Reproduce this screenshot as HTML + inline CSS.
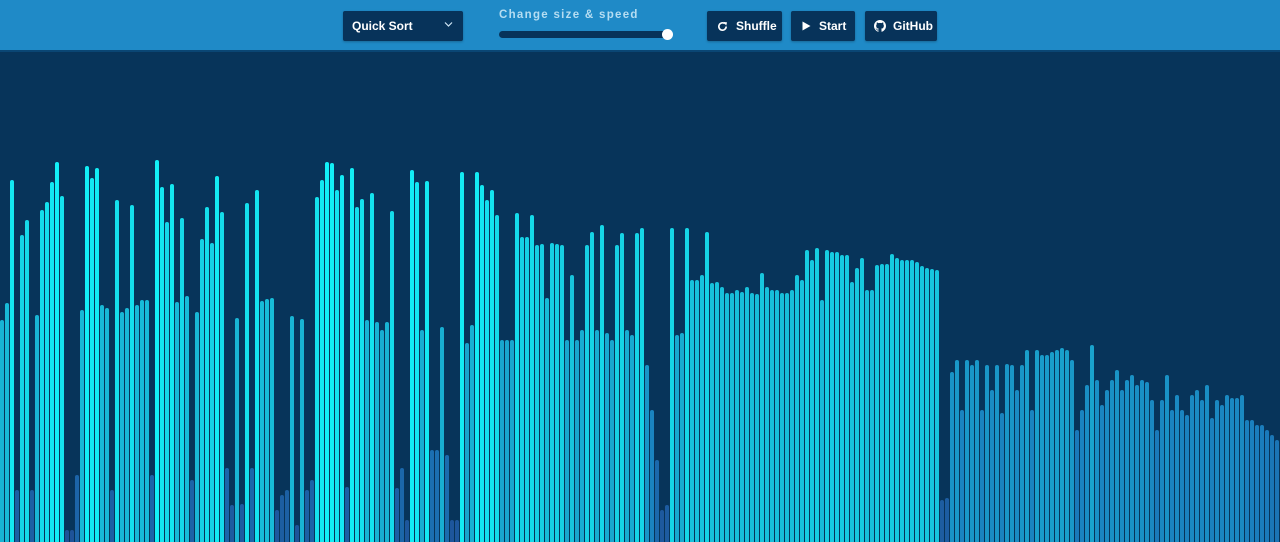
<!DOCTYPE html>
<html><head><meta charset="utf-8"><style>
*{margin:0;padding:0;box-sizing:border-box}
body{width:1280px;height:542px;overflow:hidden;background:#07345a;font-family:"Liberation Sans",sans-serif}
#hdr{position:absolute;left:0;top:0;width:1280px;height:52px;background:#1f8ac7;border-bottom:2px solid #0a4674}
.btn{position:absolute;top:11px;height:30px;background:#07335a;color:#fff;font-weight:bold;font-size:12px;border-radius:2px;display:flex;align-items:center;box-shadow:0 1px 2px rgba(0,0,0,.25)}
#lbl{position:absolute;left:499px;width:200px;top:9px;font-size:11.5px;font-weight:bold;color:#b5ddf2;letter-spacing:1.3px}
#track{position:absolute;left:499px;top:31px;width:170px;height:7px;background:#07335a;border-radius:4px}
#thumb{position:absolute;left:662px;top:29px;width:11px;height:11px;background:#fff;border-radius:50%}
#bars{position:absolute;left:0;top:53px;width:1280px;height:489px}
#bars div{position:absolute;bottom:0;width:4.4px;border-radius:2px 2px 0 0}
</style></head><body>
<div id="hdr">
<div class="btn" style="left:343px;width:120px;padding-left:9px">Quick Sort<svg style="position:absolute;left:101px;top:10px" width="9" height="7" viewBox="0 0 9 7"><path d="M1 1.5 L4.5 5 L8 1.5" fill="none" stroke="#cfe6f5" stroke-width="1.2"/></svg></div>
<div id="lbl">Change size &amp; speed</div>
<div id="track"></div><div id="thumb"></div>
<div class="btn" style="left:707px;width:75px;padding-left:10px"><svg width="11" height="11" viewBox="0 0 12 12" style="margin-right:8px"><path d="M10 6 A4 4 0 1 1 8.5 2.9" fill="none" stroke="#fff" stroke-width="1.8"/><path d="M7 1 L11 1.5 L10 5 Z" fill="#fff"/></svg>Shuffle</div>
<div class="btn" style="left:791px;width:64px;padding-left:11px"><svg width="9" height="10" viewBox="0 0 9 10" style="margin-right:8px"><path d="M0.5 0.5 L8.5 5 L0.5 9.5Z" fill="#fff"/></svg>Start</div>
<div class="btn" style="left:865px;width:72px;padding-left:9px"><svg width="12" height="12" viewBox="0 0 16 16" style="margin-right:7px"><path fill="#fff" d="M8 0C3.58 0 0 3.580 0 8c0 3.54 2.290 6.530 5.470 7.590.4.07.55-.17.55-.38v-1.33c-2.230.48-2.700-1.070-2.700-1.070-.36-.92-.89-1.170-.89-1.170-.73-.5.06-.49.06-.49.8.06 1.230.83 1.230.83.72 1.230 1.880.87 2.330.67.07-.52.28-.87.51-1.070-1.780-.2-3.640-.89-3.640-3.950 0-.87.31-1.590.82-2.150-.08-.2-.36-1.020.08-2.120 0 0 .67-.21 2.200.82a7.600 7.600 0 0 1 4 0c1.530-1.040 2.200-.82 2.200-.82.44 1.100.16 1.920.08 2.120.51.56.82 1.270.82 2.150 0 3.070-1.870 3.750-3.650 3.950.29.25.54.73.54 1.480v2.200c0 .21.15.46.55.38A8 8 0 0 0 16 8c0-4.420-3.580-8-8-8z"/></svg>GitHub</div>
</div>
<div id="bars"></div>
<script>
var t=[320,303,180,490,235,220,490,315,210,202,182,162,196,530,530,475,310,166,178,168,305,308,490,200,312,308,205,305,300,300,475,160,187,222,184,302,218,296,480,312,239,207,243,176,212,468,505,318,504,203,468,190,301,299,298,510,495,490,316,525,319,490,480,197,180,162,163,190,175,487,168,207,199,320,193,322,330,322,211,488,468,520,170,182,330,181,450,450,327,455,520,520,172,343,325,172,185,200,190,215,340,340,340,213,237,237,215,245,244,298,243,244,245,340,275,340,330,245,232,330,225,333,340,245,233,330,335,233,228,365,410,460,510,505,228,335,333,228,280,280,275,232,283,282,287,293,293,290,292,287,293,294,273,287,290,290,293,293,290,275,280,250,260,248,300,250,252,252,255,255,282,268,258,290,290,265,264,264,254,258,260,260,260,262,266,268,269,270,500,498,372,360,410,360,365,360,410,365,390,365,413,364,365,390,365,350,410,350,355,355,352,350,348,350,360,430,410,385,345,380,405,390,380,370,390,380,375,385,380,382,400,430,400,375,410,395,410,415,395,390,400,385,418,400,405,395,398,398,395,420,420,425,425,430,435,440];
var stops=[[160,[18,240,247]],[250,[22,205,226]],[320,[24,180,212]],[360,[25,152,200]],[420,[26,128,190]],[460,[27,105,172]],[540,[30,80,150]]];
function col(y){for(var i=0;i<stops.length-1;i++){var a=stops[i],b=stops[i+1];if(y<=b[0]){var f=Math.max(0,(y-a[0])/(b[0]-a[0]));return 'rgb('+a[1].map(function(v,k){return Math.round(v+(b[1][k]-v)*f)}).join(',')+')';}}return 'rgb(30,80,150)';}
var h='';for(var i=0;i<t.length;i++){h+='<div style="left:'+(i*5)+'px;height:'+(542-t[i])+'px;background:'+col(t[i])+'"></div>';}
document.getElementById('bars').innerHTML=h;
</script>
</body></html>
